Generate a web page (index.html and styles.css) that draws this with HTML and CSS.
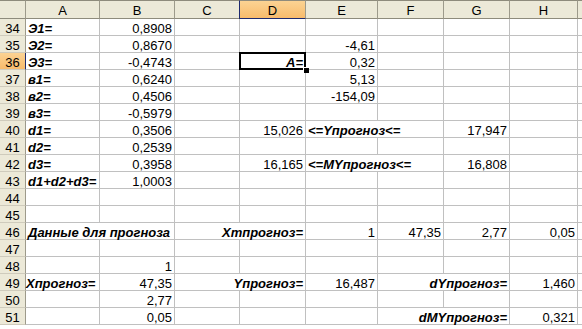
FILE: index.html
```html
<!DOCTYPE html>
<html>
<head>
<meta charset="utf-8">
<link rel="stylesheet" href="styles.css">
</head>
<body>
<div class="sheet">
  <div class="row hdr">
    <div class="h corner"></div>
    <div class="h">A</div><div class="h">B</div><div class="h">C</div>
    <div class="h sel">D</div><div class="h">E</div><div class="h">F</div>
    <div class="h">G</div><div class="h">H</div><div class="h last"></div>
  </div>

  <div class="row"><div class="rh">34</div><div class="c l">Э1=</div><div class="c n">0,8908</div><div class="c"></div><div class="c"></div><div class="c"></div><div class="c"></div><div class="c"></div><div class="c"></div><div class="c e"></div></div>
  <div class="row"><div class="rh">35</div><div class="c l">Э2=</div><div class="c n">0,8670</div><div class="c"></div><div class="c"></div><div class="c n">-4,61</div><div class="c"></div><div class="c"></div><div class="c"></div><div class="c e"></div></div>
  <div class="row"><div class="rh rsel">36</div><div class="c l">Э3=</div><div class="c n">-0,4743</div><div class="c"></div><div class="c l n active">A=<span class="handle"></span></div><div class="c n">0,32</div><div class="c"></div><div class="c"></div><div class="c"></div><div class="c e"></div></div>
  <div class="row"><div class="rh">37</div><div class="c l">в1=</div><div class="c n">0,6240</div><div class="c"></div><div class="c"></div><div class="c n">5,13</div><div class="c"></div><div class="c"></div><div class="c"></div><div class="c e"></div></div>
  <div class="row"><div class="rh">38</div><div class="c l">в2=</div><div class="c n">0,4506</div><div class="c"></div><div class="c"></div><div class="c n">-154,09</div><div class="c"></div><div class="c"></div><div class="c"></div><div class="c e"></div></div>
  <div class="row"><div class="rh">39</div><div class="c l">в3=</div><div class="c n">-0,5979</div><div class="c"></div><div class="c"></div><div class="c"></div><div class="c"></div><div class="c"></div><div class="c"></div><div class="c e"></div></div>
  <div class="row"><div class="rh">40</div><div class="c l">d1=</div><div class="c n">0,3506</div><div class="c"></div><div class="c n">15,026</div><div class="c l s2">&lt;=Yпрогноз&lt;=</div><div class="c n">17,947</div><div class="c"></div><div class="c e"></div></div>
  <div class="row"><div class="rh">41</div><div class="c l">d2=</div><div class="c n">0,2539</div><div class="c"></div><div class="c"></div><div class="c"></div><div class="c"></div><div class="c"></div><div class="c"></div><div class="c e"></div></div>
  <div class="row"><div class="rh">42</div><div class="c l">d3=</div><div class="c n">0,3958</div><div class="c"></div><div class="c n">16,165</div><div class="c l s2">&lt;=MYпрогноз&lt;=</div><div class="c n">16,808</div><div class="c"></div><div class="c e"></div></div>
  <div class="row"><div class="rh">43</div><div class="c l">d1+d2+d3=</div><div class="c n">1,0003</div><div class="c"></div><div class="c"></div><div class="c"></div><div class="c"></div><div class="c"></div><div class="c"></div><div class="c e"></div></div>
  <div class="row"><div class="rh">44</div><div class="c"></div><div class="c"></div><div class="c"></div><div class="c"></div><div class="c"></div><div class="c"></div><div class="c"></div><div class="c"></div><div class="c e"></div></div>
  <div class="row"><div class="rh">45</div><div class="c"></div><div class="c"></div><div class="c"></div><div class="c"></div><div class="c"></div><div class="c"></div><div class="c"></div><div class="c"></div><div class="c e"></div></div>
  <div class="row"><div class="rh">46</div><div class="c l s2">Данные для прогноза</div><div class="c l n s2">Xmпрогноз=</div><div class="c n">1</div><div class="c n">47,35</div><div class="c n">2,77</div><div class="c n">0,05</div><div class="c e"></div></div>
  <div class="row"><div class="rh">47</div><div class="c"></div><div class="c"></div><div class="c"></div><div class="c"></div><div class="c"></div><div class="c"></div><div class="c"></div><div class="c"></div><div class="c e"></div></div>
  <div class="row"><div class="rh">48</div><div class="c"></div><div class="c n">1</div><div class="c"></div><div class="c"></div><div class="c"></div><div class="c"></div><div class="c"></div><div class="c"></div><div class="c e"></div></div>
  <div class="row"><div class="rh">49</div><div class="c l tight">Xпрогноз=</div><div class="c n">47,35</div><div class="c l n s2">Yпрогноз=</div><div class="c n">16,487</div><div class="c l n s2">dYпрогноз=</div><div class="c n">1,460</div><div class="c e"></div></div>
  <div class="row"><div class="rh">50</div><div class="c"></div><div class="c n">2,77</div><div class="c"></div><div class="c"></div><div class="c"></div><div class="c"></div><div class="c"></div><div class="c"></div><div class="c e"></div></div>
  <div class="row"><div class="rh">51</div><div class="c"></div><div class="c n">0,05</div><div class="c"></div><div class="c"></div><div class="c"></div><div class="c l n s2">dMYпрогноз=</div><div class="c n">0,321</div><div class="c e"></div></div>
</div>
</body>
</html>
```

FILE: styles.css
```css
html, body {
  margin: 0;
  padding: 0;
  background: #ffffff;
}

.sheet {
  width: 582px;
  height: 329px;
  overflow: hidden;
  font-family: "Liberation Sans", Arial, sans-serif;
  font-size: 13px;
  color: #000000;
}

.row {
  display: grid;
  grid-template-columns: 26px 74px 75px 65px 66px 72px 66px 66px 68px 1fr;
  height: 17px;
}

.row.hdr {
  height: 19px;
}

.h {
  box-sizing: border-box;
  height: 19px;
  background: #ECE9D8;
  border-top: 1px solid #8E8B7C;
  border-right: 1px solid #9D9A8B;
  border-bottom: 1px solid #8E8B7C;
  padding-top: 2px;
  line-height: 15px;
  text-align: center;
  color: #000000;
}

.h.corner {
  border-right: 1px solid #9D9A8B;
}

.h.last {
  border-right: none;
}

.h.sel {
  background: linear-gradient(#FBD393, #F8BB6C);
  border-bottom: 1px solid #1E2A6E;
  border-left: 1px solid #1E2A6E;
  margin-left: -1px;
}

.rh {
  box-sizing: border-box;
  height: 17px;
  background: #ECE9D8;
  border-right: 1px solid #9D9A8B;
  border-bottom: 1px solid #CFCBBC;
  padding-top: 2px;
  line-height: 15px;
  text-align: center;
}

.rh.rsel {
  background: linear-gradient(#FBD393, #F8BB6C);
  border-right: 1px solid #1E2A6E;
}

.c {
  box-sizing: border-box;
  height: 17px;
  border-right: 1px solid #C0C0C0;
  border-bottom: 1px solid #C0C0C0;
  padding: 2px 2px 0 2px;
  line-height: 15px;
  white-space: nowrap;
  overflow: visible;
  position: relative;
}

.c.e {
  border-right: none;
}

.n {
  text-align: right;
}

.l {
  font-weight: bold;
  font-style: italic;
}

.tight {
  padding-left: 0;
}

.s2 {
  grid-column: span 2;
}

.active::after {
  content: "";
  position: absolute;
  left: -1px;
  top: -1px;
  right: -1px;
  bottom: -1px;
  border: 2px solid #000000;
  pointer-events: none;
}

.handle {
  position: absolute;
  right: -4px;
  bottom: -4px;
  width: 5px;
  height: 5px;
  background: #000000;
  border-left: 1px solid #ffffff;
  border-top: 1px solid #ffffff;
  z-index: 2;
}
```
